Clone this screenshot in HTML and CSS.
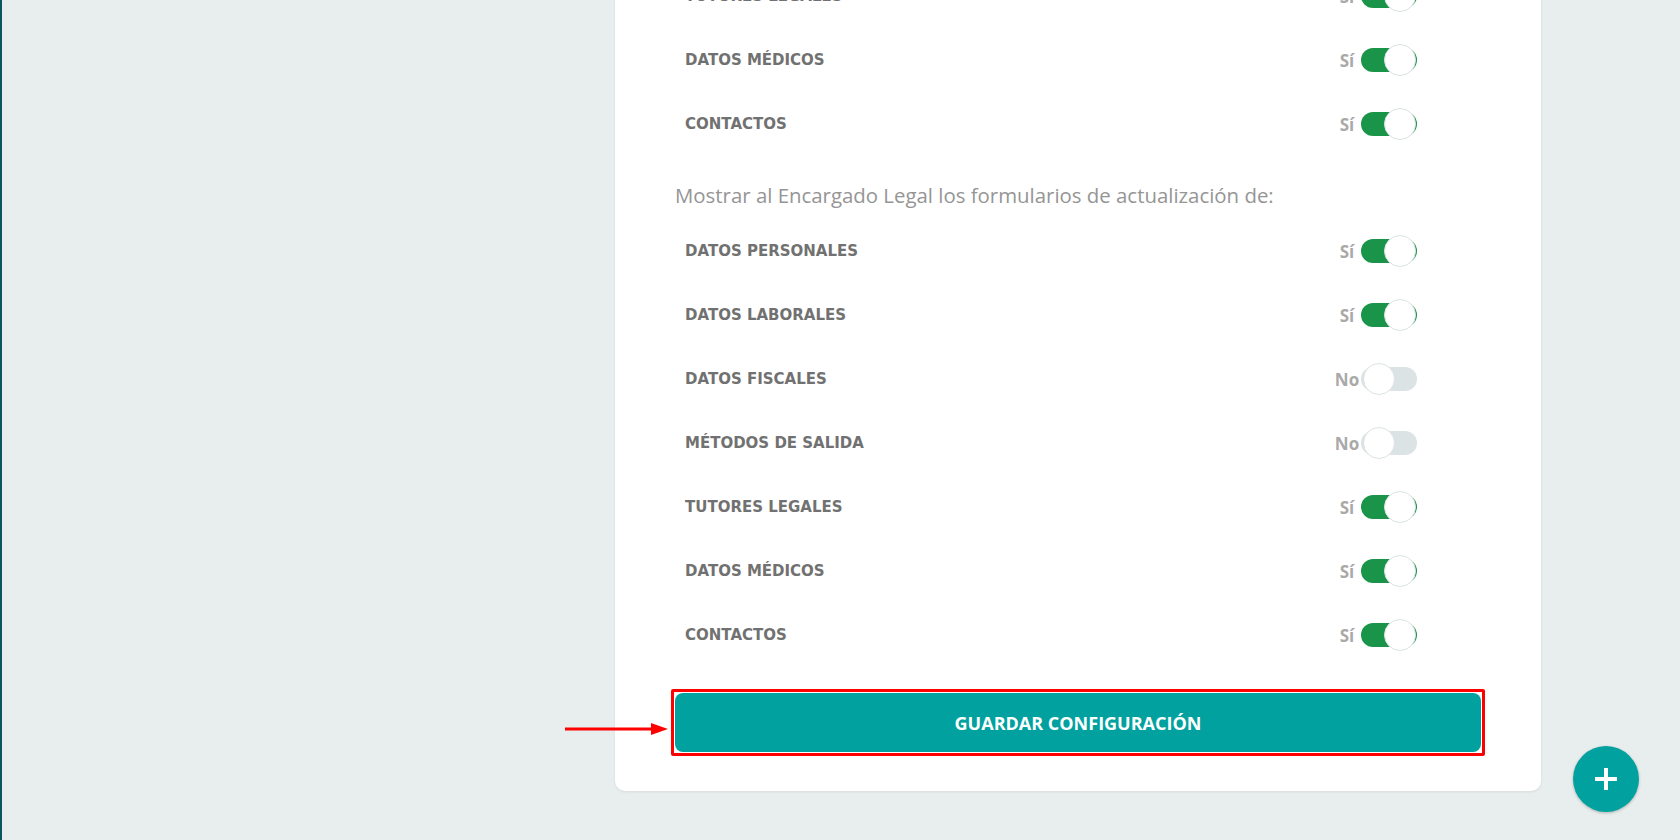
FILE: index.html
```html
<!DOCTYPE html>
<html lang="es">
<head>
    <meta charset="UTF-8">
    <meta name="viewport" content="width=device-width, initial-scale=1.0">
    <title>Configuración - Formularios</title>
    <link rel="stylesheet" href="styles.css">
</head>
<body>
    <div class="layout">
        <aside class="sidebar"></aside>
        <main class="content">
            <section class="card">
                <div class="switch-list">
                    <div class="switch-row">
                        <span class="switch-label">TUTORES LEGALES</span>
                        <span class="state">Sí</span><span class="switch on"><span class="knob"></span></span>
                    </div>
                    <div class="switch-row">
                        <span class="switch-label">DATOS MÉDICOS</span>
                        <span class="state">Sí</span><span class="switch on"><span class="knob"></span></span>
                    </div>
                    <div class="switch-row">
                        <span class="switch-label">CONTACTOS</span>
                        <span class="state">Sí</span><span class="switch on"><span class="knob"></span></span>
                    </div>
                </div>

                <p class="section-title">Mostrar al Encargado Legal los formularios de actualización de:</p>

                <div class="switch-list">
                    <div class="switch-row">
                        <span class="switch-label">DATOS PERSONALES</span>
                        <span class="state">Sí</span><span class="switch on"><span class="knob"></span></span>
                    </div>
                    <div class="switch-row">
                        <span class="switch-label">DATOS LABORALES</span>
                        <span class="state">Sí</span><span class="switch on"><span class="knob"></span></span>
                    </div>
                    <div class="switch-row">
                        <span class="switch-label">DATOS FISCALES</span>
                        <span class="state">No</span><span class="switch"><span class="knob"></span></span>
                    </div>
                    <div class="switch-row">
                        <span class="switch-label">MÉTODOS DE SALIDA</span>
                        <span class="state">No</span><span class="switch"><span class="knob"></span></span>
                    </div>
                    <div class="switch-row">
                        <span class="switch-label">TUTORES LEGALES</span>
                        <span class="state">Sí</span><span class="switch on"><span class="knob"></span></span>
                    </div>
                    <div class="switch-row">
                        <span class="switch-label">DATOS MÉDICOS</span>
                        <span class="state">Sí</span><span class="switch on"><span class="knob"></span></span>
                    </div>
                    <div class="switch-row">
                        <span class="switch-label">CONTACTOS</span>
                        <span class="state">Sí</span><span class="switch on"><span class="knob"></span></span>
                    </div>
                </div>

                <div class="actions">
                    <!-- flecha y recuadro de la captura -->
                    <svg class="annot-arrow" width="104" height="16" viewBox="0 0 104 16">
                        <line x1="0" y1="8" x2="90" y2="8" stroke="#ff0000" stroke-width="3"/>
                        <polygon points="86,2 103,8 86,14" fill="#ff0000"/>
                    </svg>
                    <div class="annot-box">
                        <button class="btn-save">GUARDAR CONFIGURACIÓN</button>
                    </div>
                </div>
            </section>
        </main>
    </div>

    <button class="fab" aria-label="Nuevo">
        <svg width="22" height="22" viewBox="0 0 22 22">
            <rect x="9" y="0" width="4" height="22" fill="#fff"/>
            <rect x="0" y="9" width="22" height="4" fill="#fff"/>
        </svg>
    </button>
</body>
</html>
```

FILE: styles.css
```css
body {
    margin: 0;
    height: 840px;
    overflow: hidden;
    font-family: "Open Sans", Arial, sans-serif;
    background-color: #e8eded;
}

.layout {
    display: flex;
    height: 100%;
}

.sidebar {
    width: 2px;
    background-color: #0b5761;
}

.content {
    flex: 1;
    display: flex;
    justify-content: flex-end;
    padding-right: 139px;
}

.card {
    width: 926px;
    box-sizing: border-box;
    margin-top: -56px;
    align-self: flex-start;
    padding: 20px 60px 35px 60px;
    background-color: white;
    border-radius: 10px;
    box-shadow: 0 1px 3px rgba(0,0,0,0.08);
}

.switch-row {
    display: flex;
    align-items: center;
    height: 64px;
    padding: 0 64px 0 10px;
}

.switch-label {
    flex: 1;
    font-family: "DejaVu Sans", sans-serif;
    font-weight: bold;
    font-size: 15px;
    color: #717171;
}

.state {
    width: 28px;
    text-align: center;
    font-weight: bold;
    font-size: 17px;
    color: #a9a9a9;
}

.switch {
    position: relative;
    width: 56px;
    height: 24px;
    border-radius: 12px;
    background-color: #dce3e4;
}

.switch.on {
    background-color: #1a9448;
}

.knob {
    position: absolute;
    top: -4px;
    left: 2px;
    width: 30px;
    height: 30px;
    border-radius: 50%;
    background-color: white;
    border: 1px solid #dce2e2;
}

.switch.on .knob {
    left: 23px;
}

.section-title {
    margin: 0;
    padding: 28px 0 12px 0;
    line-height: 23px;
    font-size: 20.4px;
    color: #959595;
}

.actions {
    position: relative;
    margin-top: 22px;
}

.annot-box {
    border: 3px solid #ff0000;
    border-radius: 2px;
    padding: 1px;
    margin: 0 -4px;
}

.btn-save {
    display: block;
    width: 100%;
    height: 59px;
    border: none;
    border-radius: 8px;
    background-color: #00a19e;
    color: white;
    font-family: "Open Sans", Arial, sans-serif;
    font-weight: bold;
    font-size: 18px;
    cursor: pointer;
}

.annot-arrow {
    position: absolute;
    left: -110px;
    top: 32px;
}

.fab {
    position: fixed;
    right: 41px;
    bottom: 28px;
    width: 66px;
    height: 66px;
    border: none;
    border-radius: 50%;
    background-color: #00a19e;
    box-shadow: 0 1px 3px rgba(0,0,0,0.25);
    display: flex;
    align-items: center;
    justify-content: center;
    cursor: pointer;
}
```
